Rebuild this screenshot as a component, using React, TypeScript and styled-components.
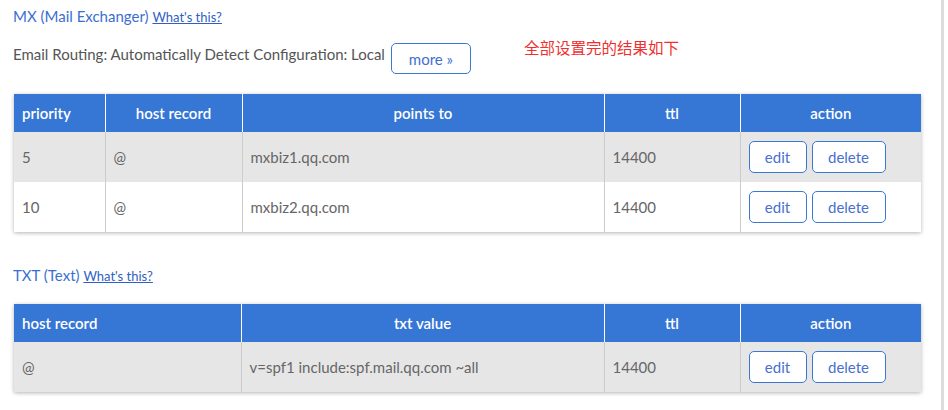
import styled, {createGlobalStyle} from "styled-components";

const GlobalStyle = createGlobalStyle`
  html, body {
    margin: 0;
    padding: 0;
    background: #fff;
  }
  body {
    font-family: Lato, "Open Sans", "Noto Sans CJK SC", sans-serif;
  }
`

type Column = {
    title: string;
    width: number;
    align?: "left" | "center";
}

type RecordTableProps = {
    columns: Column[];
    rows: string[][];
}

const mxColumns: Column[] = [
    {title: "priority", width: 91, align: "left"},
    {title: "host record", width: 137},
    {title: "points to", width: 362},
    {title: "ttl", width: 136},
    {title: "action", width: 181},
];

const txtColumns: Column[] = [
    {title: "host record", width: 227, align: "left"},
    {title: "txt value", width: 363},
    {title: "ttl", width: 136},
    {title: "action", width: 181},
];

const mxRows = [
    ["5", "@", "mxbiz1.qq.com", "14400"],
    ["10", "@", "mxbiz2.qq.com", "14400"],
];

const txtRows = [
    ["@", "v=spf1 include:spf.mail.qq.com ~all", "14400"],
];

const RecordTable = (props: RecordTableProps) => {
    return (
        <Table>
            <colgroup>
                {props.columns.map(c => <col key={c.title} style={{width: c.width}}/>)}
            </colgroup>
            <thead>
            <tr>
                {props.columns.map(c => (
                    <Th key={c.title} $align={c.align ?? "center"}>{c.title}</Th>
                ))}
            </tr>
            </thead>
            <tbody>
            {props.rows.map((row, i) => (
                <Tr key={i} $striped={i % 2 == 0}>
                    {row.map((cell, j) => <Td key={j}>{cell}</Td>)}
                    <Td>
                        <Actions>
                            <SmallButton $width={58}>edit</SmallButton>
                            <SmallButton $width={74}>delete</SmallButton>
                        </Actions>
                    </Td>
                </Tr>
            ))}
            </tbody>
        </Table>
    )
}

const App = () => {
    return (
        <Page>
            <GlobalStyle/>
            <SectionTitle>
                MX (Mail Exchanger) <HelpLink href="#">What's this?</HelpLink>
            </SectionTitle>
            <RoutingRow>
                <RoutingText>Email Routing: Automatically Detect Configuration: Local</RoutingText>
                <MoreButton>more »</MoreButton>
                <Note>全部设置完的结果如下</Note>
            </RoutingRow>
            <RecordTable columns={mxColumns} rows={mxRows}/>
            <SectionTitle $top={33}>
                TXT (Text) <HelpLink href="#">What's this?</HelpLink>
            </SectionTitle>
            <TableGap/>
            <RecordTable columns={txtColumns} rows={txtRows}/>
        </Page>
    )
}

const Page = styled.div`
  box-sizing: border-box;
  width: 944px;
  min-height: 410px;
  padding: 6px 0 0 13px;
  border-right: 3px solid #dcdcdc;
`

const SectionTitle = styled.div<{ $top?: number }>`
  margin-top: ${p => p.$top ?? 0}px;
  height: 20px;
  line-height: 20px;
  font-size: 15px;
  color: #3b6fcf;
`

const HelpLink = styled.a`
  font-size: 13px;
  color: #2f5fc4;
  text-decoration: underline;
`

const RoutingRow = styled.div`
  display: flex;
  align-items: flex-start;
  margin-top: 17px;
  height: 31px;
`

const RoutingText = styled.div`
  margin-top: 1px;
  line-height: 20px;
  font-size: 15px;
  color: #555;
`

const MoreButton = styled.button`
  box-sizing: border-box;
  margin-left: 6px;
  width: 80px;
  height: 31px;
  border: 1px solid #3a78d4;
  border-radius: 5px;
  background: #fff;
  font-family: inherit;
  font-size: 15px;
  color: #3f6fd0;
  padding: 0;
`

const Note = styled.div`
  margin: -6px 0 0 53px;
  font-family: "Noto Sans CJK SC", sans-serif;
  font-size: 15.5px;
  line-height: 20px;
  color: #f03030;
`

const TableGap = styled.div`
  height: 19px;
`

const Table = styled.table`
  margin-top: 20px;
  margin-left: 1px;
  width: 907px;
  table-layout: fixed;
  border-collapse: collapse;
  box-shadow: 0 1px 4px rgba(0, 0, 0, 0.3);
  font-size: 15px;

  &:last-child {
    margin-top: 0;
  }
`

const Th = styled.th<{ $align: "left" | "center" }>`
  height: 38px;
  padding: 0 8px;
  background: #3676d4;
  color: #fff;
  font-weight: 600;
  text-align: ${p => p.$align};
  border-left: 1px solid #fff;

  &:first-child {
    border-left: none;
  }
`

const Tr = styled.tr<{ $striped: boolean }>`
  background: ${p => p.$striped ? "#e6e6e6" : "#fff"};
`

const Td = styled.td`
  height: 50px;
  padding: 0 8px;
  color: #666;
  border-left: 1px solid #ccc;

  &:first-child {
    border-left: none;
  }
`

const Actions = styled.div`
  display: flex;
  gap: 5px;
`

const SmallButton = styled.button<{ $width: number }>`
  box-sizing: border-box;
  width: ${p => p.$width}px;
  height: 32px;
  padding: 0;
  border: 1px solid #3a78d4;
  border-radius: 5px;
  background: #fff;
  font-family: inherit;
  font-size: 15px;
  color: #4a6fd0;
`

export default App;
